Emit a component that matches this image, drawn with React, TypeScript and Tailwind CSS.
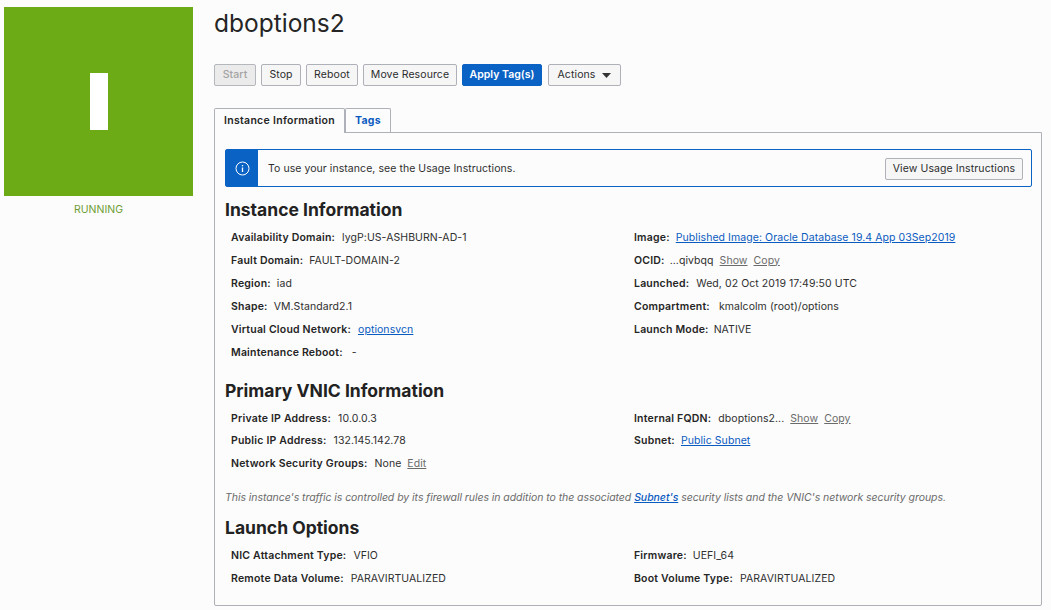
const font = { sans: "font-['Inter','Liberation_Sans',sans-serif]" };

function Info({ label, children, gap = "ml-[6px]", tight = false }: { label: string; children?: React.ReactNode; gap?: string; tight?: boolean }) {
  return (
    <div className={`flex items-center whitespace-nowrap ${tight ? "h-[22.5px]" : "h-[23px]"}`}>
      <span className="font-semibold tracking-[0.2px] text-[#252525]">{label}:</span>
      <span className={`${gap} flex items-center tracking-[0.07px] text-[#2f2f2f]`}>{children}</span>
    </div>
  );
}

function Link({ children }: { children: React.ReactNode }) {
  return <a className="text-[#0a5bc0] underline">{children}</a>;
}

function Muted({ children }: { children: React.ReactNode }) {
  return <a className="ml-[6px] text-[#6b6b6b] underline">{children}</a>;
}

const tones = {
  normal: "border-[#aeb2b8] bg-[#f6f6f7] font-normal tracking-[0.1px] text-[#2c2c2c]",
  disabled: "border-[#b4b7bb] bg-[#ebebeb] font-medium tracking-[0.1px] text-[#a3a3a3]",
  primary: "border-[#0a62c4] bg-[#0a62c4] font-semibold text-white",
};

function Btn({ children, tone = "normal", width }: { children: React.ReactNode; tone?: keyof typeof tones; width: string }) {
  return (
    <button
      type="button"
      className={`flex h-[22px] items-center justify-center rounded-[2px] border text-[10.5px] ${width} ${tones[tone]}`}
    >
      {children}
    </button>
  );
}

function Heading({ children }: { children: React.ReactNode }) {
  return <h2 className="text-[17.5px] leading-[24px] font-bold text-[#222]">{children}</h2>;
}

export default function App() {
  return (
    <div className={`${font.sans} flex h-[610px] w-[1051px] overflow-hidden bg-[#fcfcfc] text-[10.5px] text-[#2f2f2f]`}>
      <aside className="ml-[4px] w-[189px] shrink-0 pt-[7px]">
        <div className="flex h-[189px] w-[189px] items-center justify-center bg-[#6cab16]">
          <div className="h-[57px] w-[18px] bg-white" />
        </div>
        <p className="mt-[7px] text-center text-[10.5px] leading-[13px] text-[#6f9c35]">RUNNING</p>
      </aside>

      <main className="ml-[21px] w-[828px] shrink-0">
        <h1 className="mt-[7px] h-[33px] text-[24.5px] leading-[33px] text-[#252525]">dboptions2</h1>

        <div className="mt-[24px] flex gap-[5px]">
          <Btn tone="disabled" width="w-[42px]">Start</Btn>
          <Btn width="w-[40px]">Stop</Btn>
          <Btn width="w-[52px]">Reboot</Btn>
          <Btn width="w-[94px]">Move Resource</Btn>
          <Btn tone="primary" width="w-[80px]">Apply Tag(s)</Btn>
          <div className="ml-px">
            <Btn width="w-[73px]">
              Actions
              <svg className="ml-[7px]" width="9" height="5" viewBox="0 0 9 5">
                <path d="M0 0h9L4.500 5z" fill="#333" />
              </svg>
            </Btn>
          </div>
        </div>

        <div className="relative z-10 mt-[22px] flex">
          <div className="h-[25px] rounded-t-[2px] border border-b-0 border-[#aeb2b8] bg-[#fcfcfc] px-[9px] text-[10.5px] leading-[24px] font-semibold tracking-[0.3px] text-[#252525]">
            Instance Information
          </div>
          <div className="h-[24px] rounded-t-[2px] border border-b-0 border-[#aeb2b8] bg-[#fcfcfc] px-[9px] text-[10.5px] leading-[24px] font-bold tracking-[0.3px] text-[#0a5bc0]">
            Tags
          </div>
        </div>

        <section className="-mt-px h-[474px] rounded-b-[2px] border border-[#aeb2b8] px-[10px] pt-[16px]">
          <div className="flex h-[38px] w-[807px] items-center rounded-[2px] border border-[#0a62c4] pr-[8px]">
            <div className="flex h-full w-[32px] items-center justify-center bg-[#0a62c4]">
              <svg width="15" height="15" viewBox="0 0 15 15" fill="none" stroke="#fff">
                <circle cx="7.500" cy="7.500" r="6.500" strokeWidth="1" />
                <path d="M7.500 6.500v4.500" strokeWidth="1.300" />
                <path d="M7.500 4v1.300" strokeWidth="1.300" />
              </svg>
            </div>
            <span className="ml-[10px] flex-1 pt-px tracking-[0.06px]">To use your instance, see the Usage Instructions.</span>
            <div className="mt-[2px]">
              <Btn width="w-[138px]">View Usage Instructions</Btn>
            </div>
          </div>

          <div className="mt-[11px]">
            <Heading>Instance Information</Heading>
            <div className="mt-[4px] grid grid-cols-[403px_1fr] pl-[6px]">
              <div>
                <Info label="Availability Domain" gap="ml-[7px]">lygP:US-ASHBURN-AD-1</Info>
                <Info label="Fault Domain">FAULT-DOMAIN-2</Info>
                <Info label="Region">iad</Info>
                <Info label="Shape">VM.Standard2.1</Info>
                <Info label="Virtual Cloud Network" gap="ml-[7px]"><Link>optionsvcn</Link></Info>
                <Info label="Maintenance Reboot" gap="ml-[9px]">-</Info>
              </div>
              <div>
                <Info label="Image"><Link>Published Image: Oracle Database 19.4 App 03Sep2019</Link></Info>
                <Info label="OCID" gap="ml-[5px]">...qivbqq<Muted>Show</Muted><Muted>Copy</Muted></Info>
                <Info label="Launched" gap="ml-[7px]">Wed, 02 Oct 2019 17:49:50 UTC</Info>
                <Info label="Compartment" gap="ml-[9px]">kmalcolm (root)/options</Info>
                <Info label="Launch Mode" gap="ml-[5px]">NATIVE</Info>
              </div>
            </div>
          </div>

          <div className="mt-[15px]">
            <Heading>Primary VNIC Information</Heading>
            <div className="mt-[4.5px] grid grid-cols-[403px_1fr] pl-[6px]">
              <div>
                <Info tight label="Private IP Address" gap="ml-[7px]">10.0.0.3</Info>
                <Info tight label="Public IP Address" gap="ml-[7px]">132.145.142.78</Info>
                <Info tight label="Network Security Groups" gap="ml-[7px]">None<Muted>Edit</Muted></Info>
              </div>
              <div>
                <Info tight label="Internal FQDN" gap="ml-[7px]">dboptions2...<Muted>Show</Muted><Muted>Copy</Muted></Info>
                <Info tight label="Subnet"><Link>Public Subnet</Link></Info>
              </div>
            </div>
          </div>

          <p className="mt-[16px] leading-[14px] tracking-[-0.05px] whitespace-nowrap text-[#6b6b6b] italic">
            This instance's traffic is controlled by its firewall rules in addition to the associated{" "}
            <a className="font-medium text-[#0a5bc0] underline">Subnet's</a> security lists and the VNIC's network security groups.
          </p>

          <div className="mt-[11px]">
            <Heading>Launch Options</Heading>
            <div className="mt-[4px] grid grid-cols-[403px_1fr] pl-[6px]">
              <div>
                <Info label="NIC Attachment Type" gap="ml-[7px]">VFIO</Info>
                <Info label="Remote Data Volume" gap="ml-[7px]">PARAVIRTUALIZED</Info>
              </div>
              <div>
                <Info label="Firmware">UEFI_64</Info>
                <Info label="Boot Volume Type" gap="ml-[7px]">PARAVIRTUALIZED</Info>
              </div>
            </div>
          </div>
        </section>
      </main>
    </div>
  );
}
